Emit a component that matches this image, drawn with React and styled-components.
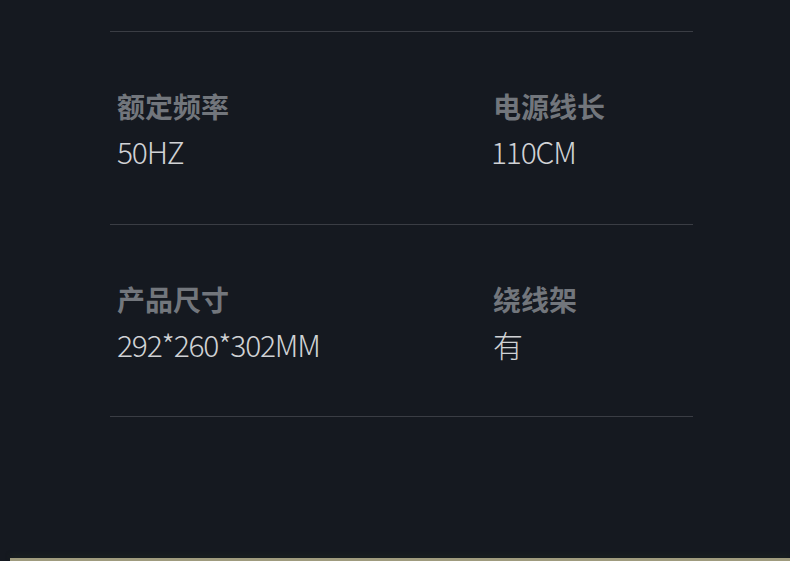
import React from 'react'
import styled, { createGlobalStyle } from 'styled-components';

const GlobalStyle = createGlobalStyle`
    html, body {
        margin: 0;
        padding: 0;
        background: #151920;
    }
`;

const Page = styled.div`
    width: 790px;
    height: 561px;
    background: #151920;
    display: flex;
    flex-direction: column;
    overflow: hidden;
    font-family: "Noto Sans CJK SC", "Noto Sans", sans-serif;
`;

const Specs = styled.div`
    margin: 31px 0 0 110px;
    width: 583px;
    border-top: 1px solid #3a3d44;
    flex: 1;
`;

const Row = styled.div`
    display: grid;
    grid-template-columns: 376px 1fr;
    height: 191.5px;
    border-bottom: 1px solid #3a3d44;
    box-sizing: content-box;
`;

const Cell = styled.div`
    padding: 56px 0 0 7px;
    display: flex;
    flex-direction: column;
`;

const Label = styled.div`
    font-size: 28px;
    line-height: 36px;
    font-weight: 700;
    color: #72767c;
`;

const Value = styled.div`
    margin-top: 7px;
    font-size: 30px;
    line-height: 40px;
    font-weight: 200;
    letter-spacing: -1.2px;
    color: #d0d2d5;
    margin-left: ${props => props.shift || 0}px;
`;

const Strip = styled.div`
    height: 3px;
    margin-left: 10px;
    background: #9f9b7e;
    box-shadow: 0 -3px 4px rgba(30, 40, 30, 0.6);
`;

const rows = [
    [['额定频率', '50HZ', 0], ['电源线长', '110CM', -2]],
    [['产品尺寸', '292*260*302MM', 0], ['绕线架', '有', 0]],
];

export default function App() {
    return (
        <Page>
            <GlobalStyle />
            <Specs>
                {rows.map((row, i) => (
                    <Row key={i}>
                        {row.map(([label, value, shift]) => (
                            <Cell key={label}>
                                <Label>{label}</Label>
                                <Value shift={shift}>{value}</Value>
                            </Cell>
                        ))}
                    </Row>
                ))}
            </Specs>
            <Strip />
        </Page>
    )
}
